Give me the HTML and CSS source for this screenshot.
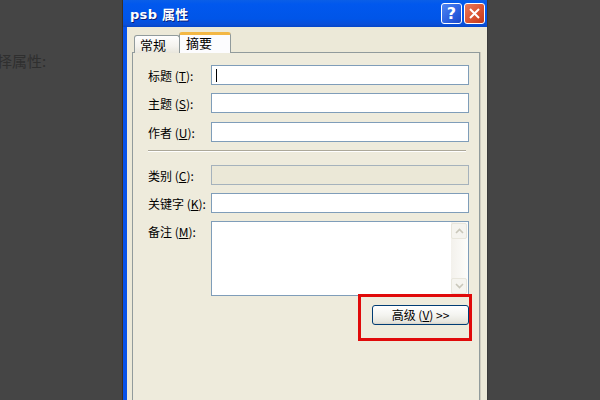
FILE: index.html
```html
<!DOCTYPE html>
<html lang="zh-CN">
<head>
  <meta charset="UTF-8">
  <meta name="viewport" content="width=device-width,initial-scale=1">
  <title>psb 属性</title>
  <link rel="stylesheet" href="styles.css">
</head>
<body>

  <div class="page">
    <div class="side-text">选择属性:</div>

    <div class="window">
      <div class="title-bar">
        <div class="title-text">psb 属性</div>
        <div class="title-buttons">
          <span class="tb-btn help">?</span>
          <span class="tb-btn close">
            <svg width="13" height="13" viewBox="0 0 13 13"><path d="M2 2 L11 11 M11 2 L2 11" stroke="#fff" stroke-width="2" fill="none"/></svg>
          </span>
        </div>
      </div>

      <div class="window-body">
        <div class="tabs">
          <div class="tab">常规</div>
          <div class="tab active">摘要</div>
        </div>

        <div class="panel">
          <div class="row">
            <label class="lbl">标题 (<u>T</u>):</label>
            <div class="field"><span class="caret"></span></div>
          </div>
          <div class="row">
            <label class="lbl">主题 (<u>S</u>):</label>
            <div class="field"></div>
          </div>
          <div class="row">
            <label class="lbl">作者 (<u>U</u>):</label>
            <div class="field"></div>
          </div>

          <div class="sep"></div>

          <div class="row">
            <label class="lbl">类别 (<u>C</u>):</label>
            <div class="field disabled"></div>
          </div>
          <div class="row">
            <label class="lbl">关键字 (<u>K</u>):</label>
            <div class="field"></div>
          </div>
          <div class="row memo">
            <label class="lbl">备注 (<u>M</u>):</label>
            <div class="field area">
              <div class="scrollbar">
                <span class="sb-btn">
                  <svg width="9" height="6" viewBox="0 0 9 6"><path d="M1 5 L4.5 1.5 L8 5" stroke="#c9c7ba" stroke-width="1.6" fill="none"/></svg>
                </span>
                <span class="sb-btn">
                  <svg width="9" height="6" viewBox="0 0 9 6"><path d="M1 1 L4.5 4.5 L8 1" stroke="#c9c7ba" stroke-width="1.6" fill="none"/></svg>
                </span>
              </div>
            </div>
          </div>

          <div class="actions">
            <button class="xp-btn">高级 (<u>V</u>) &gt;&gt;</button>
          </div>

          <div class="mark"></div>
        </div>
      </div>
    </div>
  </div>

</body>
</html>
```

FILE: styles.css
```css
body {
  margin: 0;
  background-color: #454545;
  font-family: "Noto Sans CJK SC", "DejaVu Sans", sans-serif;
  font-size: 12px;
  color: #000;
  overflow: hidden;
}
.page {
  display: flex;
  height: 400px;
}
.side-text {
  width: 140px;
  flex: none;
  padding-top: 50px;
  margin-left: -18px;
  font-size: 15px;
  color: #2f2f2f;
  white-space: nowrap;
}
.window {
  width: 364px;
  flex: none;
  border-left: 1px solid #3b3023;
  border-right: 1px solid #3a3a3a;
  display: flex;
  flex-direction: column;
}
.title-bar {
  height: 27px;
  display: flex;
  align-items: center;
  justify-content: space-between;
  background: linear-gradient(#0a5ee8, #0158ee 15%, #0055e8 70%, #0a4fd8 90%, #0546c8);
}
.title-text {
  padding-left: 7px;
  font-family: "DejaVu Sans", "Noto Sans CJK SC", sans-serif;
  font-weight: bold;
  font-size: 13px;
  color: #fff;
  text-shadow: 1px 1px 0 #0a1f7a;
  letter-spacing: 0.3px;
}
.title-buttons {
  display: flex;
  gap: 2px;
  padding-right: 2px;
}
.tb-btn {
  width: 19px;
  height: 19px;
  border: 1px solid #fff;
  border-radius: 3px;
  display: flex;
  align-items: center;
  justify-content: center;
  color: #fff;
  font-family: "DejaVu Sans", sans-serif;
  font-weight: bold;
  font-size: 16px;
}
.tb-btn.help { background: linear-gradient(135deg, #4f86f2, #2a5fe0 60%, #1b48c8); }
.tb-btn.close { background: linear-gradient(135deg, #e97a5c, #d8502e 60%, #c2381a); }
.window-body {
  flex: 1;
  background: #ece9d8;
  border-left: 4px solid #0752e8;
  padding: 5px 7px 0 5px;
  display: flex;
  flex-direction: column;
}
.tabs {
  display: flex;
  align-items: flex-end;
  height: 21px;
  padding-left: 2px;
  margin-bottom: -1px;
  position: relative;
  z-index: 1;
}
.tab {
  width: 46px;
  height: 18px;
  box-sizing: border-box;
  border: 1px solid #919b9c;
  border-bottom: none;
  border-radius: 3px 3px 0 0;
  background: linear-gradient(#fefefe, #f4f3ee 60%, #e8e6dc);
  padding-left: 5px;
  font-size: 13px;
  line-height: 18px;
}
.tab.active {
  width: 52px;
  height: 21px;
  border-top: 3px solid #f3b744;
  background: #fcfcfe;
  padding-left: 6px;
  line-height: 16px;
  margin-left: -1px;
}
.panel {
  flex: 1;
  position: relative;
  border: 1px solid #919b9c;
  border-bottom: none;
  box-shadow: 1px 0 0 #d0cdc0;
  background: #eeebdc;
  padding: 12px 10px 0 15px;
}
.row {
  display: flex;
  align-items: center;
  height: 20px;
  margin-bottom: 8px;
}
.row:nth-child(2) { margin-bottom: 9px; }
.lbl {
  width: 63px;
  flex: none;
  font-size: 12px;
  white-space: nowrap;
}
.field {
  flex: 1;
  height: 20px;
  box-sizing: border-box;
  border: 1px solid #7f9db9;
  background: #fff;
  position: relative;
}
.field.disabled { background: #ebe8d7; border-color: #a5b2bc; }
.caret {
  position: absolute;
  left: 4px;
  top: 3px;
  width: 1px;
  height: 13px;
  background: #000;
}
.sep {
  height: 0;
  border-top: 1px solid #aca899;
  border-bottom: 1px solid #fff;
  margin: 6px 3px 13px 0;
}
.row.memo {
  height: 75px;
  align-items: flex-start;
  margin-bottom: 9px;
}
.row.memo .lbl { padding-top: 2px; }
.field.area {
  height: 75px;
  display: flex;
  justify-content: flex-end;
}
.scrollbar {
  width: 17px;
  background: linear-gradient(90deg, #f3f1ec, #fdfdfb);
  display: flex;
  flex-direction: column;
  justify-content: space-between;
  padding: 1px 1px 1px 0;
  box-sizing: border-box;
}
.sb-btn {
  height: 16px;
  border: 1px solid #e8e6dc;
  border-radius: 2px;
  background: #f5f4ef;
  display: flex;
  align-items: center;
  justify-content: center;
  box-sizing: border-box;
}
.actions {
  display: flex;
  justify-content: flex-end;
}
.xp-btn {
  width: 97px;
  height: 20px;
  border: 1px solid #003c74;
  border-radius: 3px;
  background: linear-gradient(#fff, #f4f4f0 50%, #e6e5dd 90%, #d6d0c5);
  font-family: "Noto Sans CJK SC", sans-serif;
  font-size: 12px;
  padding: 0;
  line-height: 16px;
  color: #000;
}
.mark {
  position: absolute;
  left: 225px;
  top: 241px;
  width: 108px;
  height: 41px;
  border: 3px solid #e00a0a;
}
```
